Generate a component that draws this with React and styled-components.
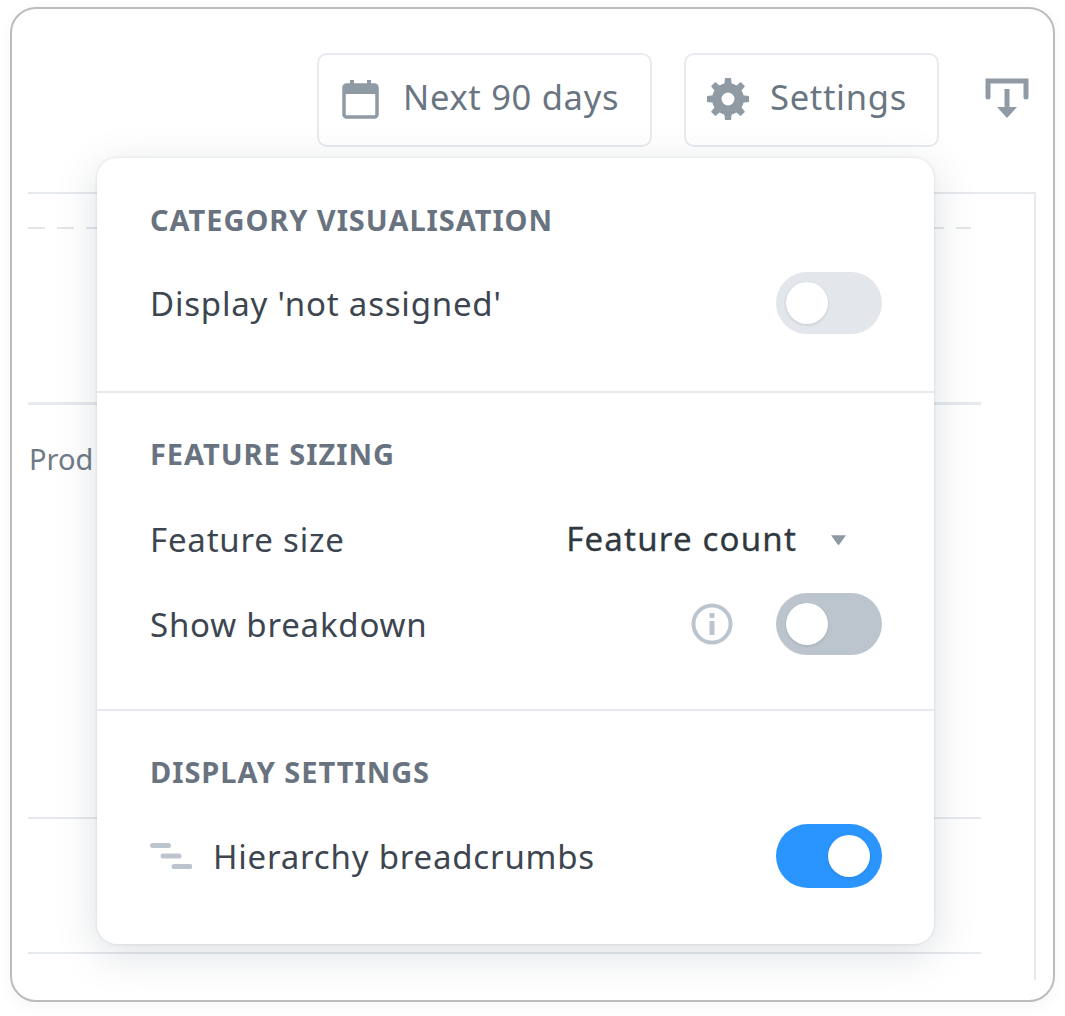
import React from "react";
import styled, { createGlobalStyle } from "styled-components";

const Global = createGlobalStyle`
  html, body { margin: 0; padding: 0; background: #fff; }
  body { font-family: "Noto Sans", "Open Sans", sans-serif; }
  * { box-sizing: border-box; }
`;

const Page = styled.div`
  width: 1065px;
  height: 1016px;
  padding: 7px 10px 14px;
`;

const Frame = styled.div`
  position: relative;
  width: 1045px;
  height: 995px;
  border: 2px solid #bcbcbc;
  border-radius: 26px;
  background: #fff;
  box-shadow: 0 4px 14px rgba(60, 70, 80, 0.05);
`;

const Toolbar = styled.div`
  display: flex;
  justify-content: flex-end;
  align-items: center;
  padding: 44px 24px 0 0;
`;

const ToolButton = styled.div`
  display: flex;
  align-items: center;
  height: 94px;
  width: ${(p) => p.$width}px;
  margin-right: ${(p) => p.$after}px;
  padding: 0 0 3px ${(p) => p.$pad}px;
  gap: ${(p) => p.$gap}px;
  border: 2px solid #e7eaee;
  border-radius: 10px;
  color: #6a7582;
  font-size: 34.5px;
  line-height: 40px;
  letter-spacing: 0.7px;
  background: #fff;
`;

const ButtonText = styled.span`
  padding-bottom: 4px;
`;

const ExportIcon = styled.svg`
  display: block;
  width: 44px;
  height: 44px;
  margin-top: -2px;
`;

const Chart = styled.div`
  margin: 45px 17px 0 16px;
  height: 788px;
  border-top: 2px solid #e6e9ed;
  border-right: 2px solid #e6e9ed;
  padding-right: 53px;
`;

const Dashes = styled.div`
  height: 2px;
  margin-right: 10px;
  background: repeating-linear-gradient(90deg, #e2e5e9 0 17px, transparent 17px 29px);
`;

const BandHead = styled.div`
  height: 211px;
  padding-top: 33px;
  border-bottom: 3px solid #e6e9ed;
`;

const Band = styled.div`
  height: ${(p) => p.$height}px;
  border-bottom: 2px solid #e6e9ed;
  padding: 36px 0 0 1px;
  color: #6f7a86;
  font-size: 29px;
  line-height: 36px;
`;

const Popover = styled.div`
  position: absolute;
  left: 85px;
  top: 149px;
  width: 837px;
  height: 786px;
  padding-top: 2px;
  border-radius: 20px;
  background: #fff;
  box-shadow: 0 10px 42px rgba(60, 75, 95, 0.18), 0 0 3px rgba(60, 75, 95, 0.16);
`;

const Section = styled.section`
  padding: ${(p) => p.$top}px 52px ${(p) => p.$bottom}px 53px;
  & + & {
    border-top: 2px solid #e6e9ed;
  }
`;

const Heading = styled.h3`
  margin: 0 0 ${(p) => p.$gap}px;
  font-size: 29px;
  line-height: 34px;
  font-weight: 700;
  letter-spacing: 0.95px;
  color: #69737f;
`;

const Row = styled.div`
  display: flex;
  align-items: center;
  min-height: 62px;
  & + & {
    margin-top: 23px;
  }
`;

const Label = styled.span`
  flex: 1;
  padding-top: 1px;
  font-size: 33px;
  line-height: 40px;
  letter-spacing: 0.8px;
  color: #3d4650;
`;

const Select = styled.div`
  display: flex;
  align-items: center;
  gap: 33px;
  margin-right: 35px;
  font-size: 33px;
  line-height: 40px;
  letter-spacing: 1.2px;
  color: #30383f;
  -webkit-text-stroke: 0.3px #30383f;
`;

const Caret = styled.svg`
  display: block;
  width: 17px;
  height: 13px;
`;

const Toggle = styled.div`
  display: flex;
  align-items: center;
  justify-content: ${(p) => (p.$on ? "flex-end" : "flex-start")};
  width: 106px;
  height: ${(p) => (p.$on ? 64 : 62)}px;
  padding: 0 ${(p) => (p.$on ? 12 : 10)}px;
  border-radius: 32px;
  background: ${(p) => p.$bg};
`;

const Knob = styled.div`
  width: 42px;
  height: 42px;
  border-radius: 50%;
  background: #fff;
  box-shadow: 0 1px 3px rgba(50, 60, 70, 0.18);
`;

const InfoIcon = styled.svg`
  display: block;
  width: 42px;
  height: 42px;
  margin-right: 43px;
`;

const CrumbIcon = styled.svg`
  display: block;
  width: 42px;
  height: 28px;
  margin-right: 21px;
`;

const Gear = () => (
  <svg width="44" height="44" viewBox="0 0 44 44" aria-hidden="true">
    {[0, 45, 90, 135, 180, 225, 270, 315].map((a) => (
      <path key={a} d="M18 10 19 1h6l1 9z" fill="#8f9aa5" transform={`rotate(${a} 22 22)`} />
    ))}
    <circle cx="22" cy="22" r="11.2" fill="none" stroke="#8f9aa5" strokeWidth="9.5" />
  </svg>
);

const Calendar = () => (
  <svg width="38" height="40" viewBox="0 0 38 40" aria-hidden="true">
    <rect x="2" y="6" width="33" height="32" rx="2.5" fill="none" stroke="#8f9aa5" strokeWidth="3.5" />
    <rect x="2" y="6" width="33" height="9" fill="#8f9aa5" />
    <rect x="8" y="1" width="4" height="7" fill="#8f9aa5" />
    <rect x="25" y="1" width="4" height="7" fill="#8f9aa5" />
  </svg>
);

export default function App() {
  return (
    <Page>
      <Global />
      <Frame>
        <Toolbar>
          <ToolButton $width={335} $after={32} $pad={23} $gap={23}>
            <Calendar />
            <ButtonText>Next 90 days</ButtonText>
          </ToolButton>
          <ToolButton $width={255} $after={46} $pad={20} $gap={20}>
            <Gear />
            <ButtonText>Settings</ButtonText>
          </ToolButton>
          <ExportIcon viewBox="0 0 44 44" aria-hidden="true">
            <path d="M3 20V4h38v16" fill="none" stroke="#8f9aa5" strokeWidth="5" strokeLinecap="round" strokeLinejoin="miter" />
            <path d="M22 12v20" stroke="#8f9aa5" strokeWidth="5" />
            <path d="M12 30h20L22 41z" fill="#8f9aa5" />
          </ExportIcon>
        </Toolbar>
        <Chart>
          <BandHead>
            <Dashes />
          </BandHead>
          <Band $height={414}>Prod</Band>
          <Band $height={135} />
        </Chart>
        <Popover>
          <Section $top={43} $bottom={57}>
            <Heading $gap={35}>CATEGORY VISUALISATION</Heading>
            <Row>
              <Label>Display 'not assigned'</Label>
              <Toggle $bg="#e3e6ea"><Knob /></Toggle>
            </Row>
          </Section>
          <Section $top={44} $bottom={54}>
            <Heading $gap={37}>FEATURE SIZING</Heading>
            <Row>
              <Label>Feature size</Label>
              <Select>
                Feature count
                <Caret viewBox="0 0 16 12" aria-hidden="true">
                  <path d="M1 2h14L9 10.500a1.200 1.200 0 0 1-2 0z" fill="#8f9aa5" />
                </Caret>
              </Select>
            </Row>
            <Row>
              <Label>Show breakdown</Label>
              <InfoIcon viewBox="0 0 42 42" aria-hidden="true">
                <circle cx="21" cy="21" r="18.500" fill="none" stroke="#bcc5cd" strokeWidth="4" />
                <rect x="18.500" y="18" width="5" height="14" fill="#bcc5cd" />
                <rect x="18.500" y="10" width="5" height="5" rx="1" fill="#bcc5cd" />
              </InfoIcon>
              <Toggle $bg="#bcc5cd"><Knob /></Toggle>
            </Row>
          </Section>
          <Section $top={44} $bottom={40}>
            <Heading $gap={35}>DISPLAY SETTINGS</Heading>
            <Row>
              <CrumbIcon viewBox="0 0 42 28" aria-hidden="true">
                <g stroke="#bcc5cd" strokeWidth="5" strokeLinecap="round">
                  <path d="M2.500 3.500h16" />
                  <path d="M13 14h16" />
                  <path d="M24 24.500h16" />
                </g>
              </CrumbIcon>
              <Label>Hierarchy breadcrumbs</Label>
              <Toggle $on $bg="#2a94ff"><Knob /></Toggle>
            </Row>
          </Section>
        </Popover>
      </Frame>
    </Page>
  );
}
